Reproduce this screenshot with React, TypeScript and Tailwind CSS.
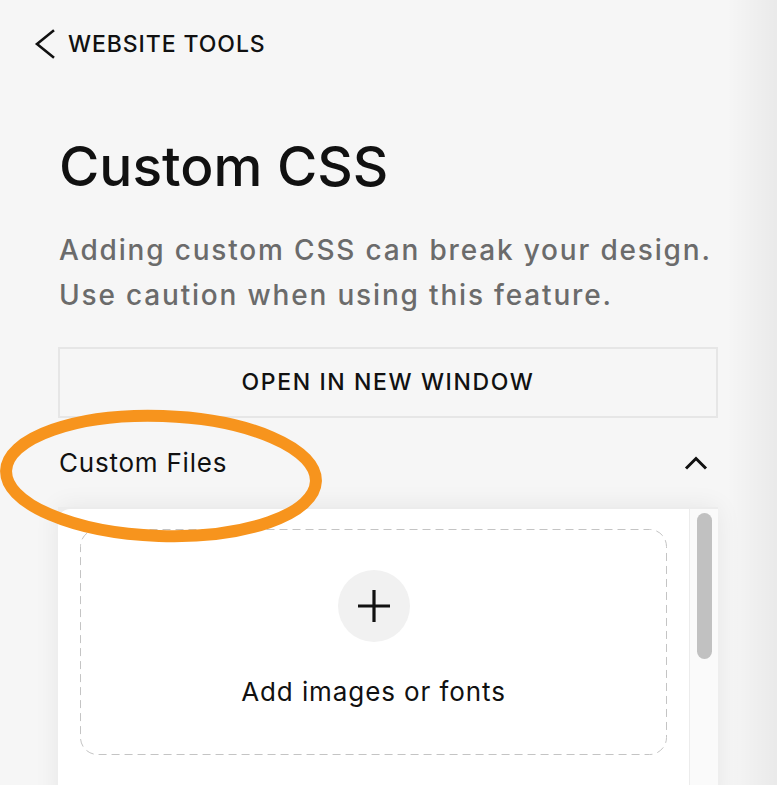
import React from 'react';

const font = { fontFamily: 'Inter, "Noto Sans", sans-serif' };

function BackChevron() {
  return (
    <svg width="22" height="30" viewBox="0 0 22 30" fill="none">
      <polyline
        points="19,2 3,15 19,28"
        stroke="#111"
        strokeWidth="2.6"
        strokeLinecap="square"
        strokeLinejoin="miter"
      />
    </svg>
  );
}

function ChevronUp() {
  return (
    <svg width="24" height="16" viewBox="0 0 24 16" fill="none">
      <polyline
        points="2,13.5 12,3.5 22,13.5"
        stroke="#111"
        strokeWidth="3"
        strokeLinejoin="miter"
      />
    </svg>
  );
}

function DropZone() {
  return (
    <div className="relative w-[587px] h-[226px] flex flex-col items-center">
      <svg className="absolute inset-0" width="587" height="226" viewBox="0 0 587 226" fill="none">
        <rect
          x="0.5"
          y="0.5"
          width="586"
          height="225"
          rx="17"
          stroke="#c4c4c4"
          strokeWidth="1"
          strokeDasharray="8 5"
        />
      </svg>
      <div className="mt-[41px] w-[72px] h-[72px] rounded-full bg-[#f1f1f1] flex items-center justify-center">
        <svg width="32" height="32" viewBox="0 0 32 32" fill="none">
          <path d="M16 0v32M0 16h32" stroke="#111" strokeWidth="3.2" />
        </svg>
      </div>
      <div className="mt-[33px] text-[26px] leading-[34px] tracking-[0.035em] text-[#111]">
        Add images or fonts
      </div>
    </div>
  );
}

export default function App() {
  return (
    <div className="relative w-full h-[785px] overflow-hidden bg-[#f6f6f6]" style={font}>
      <div className="flex items-center gap-[12px] pt-[29px] pl-[34px]">
        <BackChevron />
        <span className="text-[23px] leading-[30px] font-medium tracking-[0.04em] text-[#111]">
          WEBSITE TOOLS
        </span>
      </div>

      <div className="pl-[58px] pr-[59px]">
        <h1 className="mt-[75px] ml-[1px] text-[55px] leading-[64px] font-medium text-[#111]">
          Custom CSS
        </h1>
        <p className="mt-[30px] ml-[1px] text-[28px] leading-[45px] font-medium tracking-[0.065em] text-[#6b6b6b] whitespace-nowrap">
          Adding custom CSS can break your design.
          <br />
          Use caution when using this feature.
        </p>

        <button className="mt-[29px] w-full h-[71px] border-2 border-[#e6e6e6] flex items-center justify-center text-[23px] font-medium tracking-[0.07em] text-[#111]">
          OPEN IN NEW WINDOW
        </button>

        <div className="h-[89px] flex items-center justify-between pl-[1px] pr-[10px]">
          <span className="text-[26px] tracking-[0.03em] text-[#111]">Custom Files</span>
          <ChevronUp />
        </div>

        <div className="h-[300px] flex bg-[#ececec] pt-[2px] shadow-[0_0_24px_rgba(0,0,0,0.07)]">
          <div className="flex-1 bg-white rounded-tl-[12px] pt-[20px] pl-[22px]">
            <DropZone />
          </div>
          <div className="w-[29px] bg-[#fafafa] border-l border-[#ececec] pt-[4px] flex justify-center">
            <div className="w-[15px] h-[146px] rounded-full bg-[#c1c1c1]" />
          </div>
        </div>
      </div>

      <div className="pointer-events-none absolute right-0 top-0 h-full w-[50px] bg-gradient-to-r from-transparent to-[rgba(0,0,0,0.05)]" />

      <svg
        className="pointer-events-none absolute left-0 top-[400px]"
        width="340"
        height="150"
        viewBox="0 0 340 150"
        fill="none"
      >
        <ellipse
          cx="161"
          cy="76"
          rx="155"
          ry="60"
          transform="rotate(2 161 76)"
          stroke="#f7941d"
          strokeWidth="12"
        />
      </svg>
    </div>
  );
}
